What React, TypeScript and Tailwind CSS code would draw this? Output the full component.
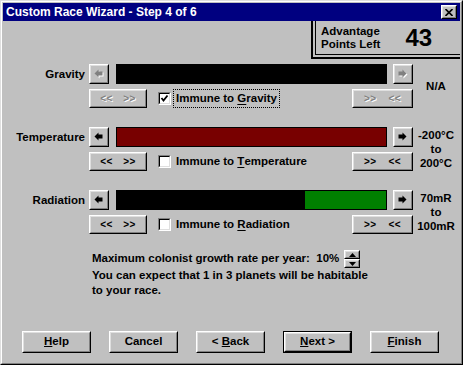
import React from "react"

const font = "font-['Liberation_Sans',Arial,sans-serif]"

function Bevel({ className = "", children }: { className?: string; children?: React.ReactNode }) {
  return (
    <div className={`border border-t-white border-l-white border-b-black border-r-black bg-[#c0c0c0] ${className}`}>
      <div className="h-full w-full border border-t-[#dfdfdf] border-l-[#dfdfdf] border-b-[#808080] border-r-[#808080] flex items-center justify-center">
        {children}
      </div>
    </div>
  )
}

function ArrowGlyph({ dir, disabled }: { dir: "left" | "right"; disabled?: boolean }) {
  const pts = "0.5,4.5 4.5,0.5 4.5,2.5 8.5,2.5 8.5,6.5 4.5,6.5 4.5,8.5"
  const flip = dir === "right" ? "translate(9,0) scale(-1,1)" : undefined
  return (
    <svg width="10" height="10" viewBox="0 0 10 10">
      {disabled && (
        <g transform="translate(1,1)">
          <polygon points={pts} fill="#ffffff" transform={flip} />
        </g>
      )}
      <polygon points={pts} fill={disabled ? "#808080" : "#000000"} transform={flip} />
    </svg>
  )
}

function ArrowBtn({ dir, disabled }: { dir: "left" | "right"; disabled?: boolean }) {
  return (
    <Bevel className="w-[20px] h-[20px] shrink-0">
      <ArrowGlyph dir={dir} disabled={disabled} />
    </Bevel>
  )
}

function StepBtn({ first, second, disabled, width }: { first: string; second: string; disabled?: boolean; width: string }) {
  const txt = disabled
    ? "text-[#808080] [text-shadow:1px_1px_0_#ffffff]"
    : "text-black"
  return (
    <Bevel className={`${width} h-full shrink-0`}>
      <div className={`flex w-full justify-around px-[4px] text-[10px] font-bold leading-none tracking-[0.5px] ${txt}`}>
        <span>{first}</span>
        <span>{second}</span>
      </div>
    </Bevel>
  )
}

function CheckBox({ checked }: { checked?: boolean }) {
  return (
    <div className="w-[13px] h-[13px] shrink-0 border border-t-[#808080] border-l-[#808080] border-b-white border-r-white">
      <div className="w-full h-full bg-white border border-t-black border-l-black border-b-[#dfdfdf] border-r-[#dfdfdf] flex items-center justify-center">
        {checked && (
          <svg width="9" height="9" viewBox="0 0 9 9">
            <polyline points="1.5,4 3.5,6.5 7.5,1.5" fill="none" stroke="#000" strokeWidth="1.8" />
          </svg>
        )}
      </div>
    </div>
  )
}

interface SectionProps {
  label: string
  ulChar: string
  ulRest: string
  checked?: boolean
  focused?: boolean
  disabled?: boolean
  bar: React.ReactNode
  right: React.ReactNode
}

function Section({ label, ulChar, ulRest, checked, focused, disabled, bar, right }: SectionProps) {
  return (
    <div className="flex">
      <div className="w-[410px] flex flex-col">
        <div className="flex h-[20px] items-center">
          <div className="w-[82px] text-right font-bold text-[11.5px] leading-[20px]">{label}</div>
          <div className="ml-[4px]">
            <ArrowBtn dir="left" disabled={disabled} />
          </div>
          <div className="ml-[7px] w-[271px] h-[20px] border border-black">{bar}</div>
          <div className="ml-[6px]">
            <ArrowBtn dir="right" disabled={disabled} />
          </div>
        </div>
        <div className="flex h-[19px] items-center mt-[5px] pl-[86px]">
          <StepBtn first="<<" second=">>" disabled={disabled} width="w-[58px]" />
          <div className="ml-[11px]">
            <CheckBox checked={checked} />
          </div>
          <div
            className={`ml-[2px] h-[19px] px-[2px] flex items-center font-bold text-[11.5px] border border-dotted ${
              focused ? "border-black" : "border-transparent"
            }`}
          >
            Immune to&nbsp;<u className="underline-offset-[2px]">{ulChar}</u>
            {ulRest}
          </div>
          <div className="ml-auto h-full">
            <StepBtn first=">>" second="<<" disabled={disabled} width="w-[61px]" />
          </div>
        </div>
      </div>
      <div className="ml-[3px] w-[40px] flex items-center justify-center text-center font-bold text-[11.5px] leading-[14px]">
        {right}
      </div>
    </div>
  )
}

function DialogBtn({ children, isDefault }: { children: React.ReactNode; isDefault?: boolean }) {
  const inner = (
    <Bevel className="w-full h-full">
      <span className="font-bold text-[11.5px] leading-none">{children}</span>
    </Bevel>
  )
  return isDefault ? (
    <div className="w-[69px] h-[22px] border border-black">{inner}</div>
  ) : (
    <div className="w-[69px] h-[22px]">{inner}</div>
  )
}

export default function App() {
  return (
    <div className={`w-[463px] h-[365px] ${font} text-black select-none`}>
      <div className="w-full h-full bg-[#c0c0c0] border border-t-[#dfdfdf] border-l-[#dfdfdf] border-b-black border-r-black">
        <div className="w-full h-full border border-t-white border-l-white border-b-[#808080] border-r-[#808080] p-px flex flex-col">
          {/* title bar */}
          <div className="h-[18px] shrink-0 bg-[#000080] flex items-center pl-[3px] pr-[3px]">
            <span className="text-white font-bold text-[12px] leading-none">Custom Race Wizard - Step 4 of 6</span>
            <Bevel className="ml-auto w-[16px] h-[14px]">
              <svg width="8" height="7" viewBox="0 0 8 7">
                <path d="M0.5 0 L7.5 7 M7.5 0 L0.5 7" stroke="#000" strokeWidth="1.6" />
              </svg>
            </Bevel>
          </div>

          {/* advantage points */}
          <div className="h-[38px] shrink-0 flex justify-end">
            <div className="w-[149px] h-full border-l-2 border-b-2 border-black pl-[2px] pb-[2px]">
              <div className="h-full border-l border-b border-black flex items-center pl-[5px]">
                <div className="font-bold text-[11.5px] leading-[13px]">
                  Advantage
                  <br />
                  Points Left
                </div>
                <div className="ml-[25px] font-bold text-[24px] leading-none">43</div>
              </div>
            </div>
          </div>

          {/* habitability sections */}
          <div className="mt-[5px] flex flex-col gap-[19px]">
            <Section
              label="Gravity"
              ulChar="G"
              ulRest="ravity"
              checked
              focused
              disabled
              bar={<div className="w-full h-full bg-black" />}
              right={<span>N/A</span>}
            />
            <Section
              label="Temperature"
              ulChar="T"
              ulRest="emperature"
              bar={<div className="w-full h-full bg-[#780000]" />}
              right={
                <span>
                  -200°C
                  <br />
                  to
                  <br />
                  200°C
                </span>
              }
            />
            <Section
              label="Radiation"
              ulChar="R"
              ulRest="adiation"
              bar={
                <div className="w-full h-full bg-black flex justify-end">
                  <div className="w-[81px] h-full bg-[#008000]" />
                </div>
              }
              right={
                <span>
                  70mR
                  <br />
                  to
                  <br />
                  100mR
                </span>
              }
            />
          </div>

          {/* growth rate */}
          <div className="mt-[16px] h-[18px] flex items-center pl-[89px]">
            <span className="font-bold text-[11.5px]">Maximum colonist growth rate per year:&nbsp; 10%</span>
            <div className="ml-[5px] w-[16px] flex flex-col">
              <Bevel className="w-full h-[9px]">
                <svg width="7" height="4" viewBox="0 0 7 4">
                  <polygon points="0,4 3.5,0 7,4" fill="#000" />
                </svg>
              </Bevel>
              <Bevel className="w-full h-[9px]">
                <svg width="7" height="4" viewBox="0 0 7 4">
                  <polygon points="0,0 7,0 3.5,4" fill="#000" />
                </svg>
              </Bevel>
            </div>
          </div>
          <p className="pl-[89px] w-[370px] font-bold text-[11.5px] leading-[15px]">
            You can expect that 1 in 3 planets will be habitable to your race.
          </p>

          {/* dialog buttons */}
          <div className="mt-auto flex pl-[19px] gap-[18px] pb-[9px]">
            <DialogBtn>
              <u>H</u>elp
            </DialogBtn>
            <DialogBtn>Cancel</DialogBtn>
            <DialogBtn>
              &lt; <u>B</u>ack
            </DialogBtn>
            <DialogBtn isDefault>
              <u>N</u>ext &gt;
            </DialogBtn>
            <DialogBtn>
              <u>F</u>inish
            </DialogBtn>
          </div>
        </div>
      </div>
    </div>
  )
}
